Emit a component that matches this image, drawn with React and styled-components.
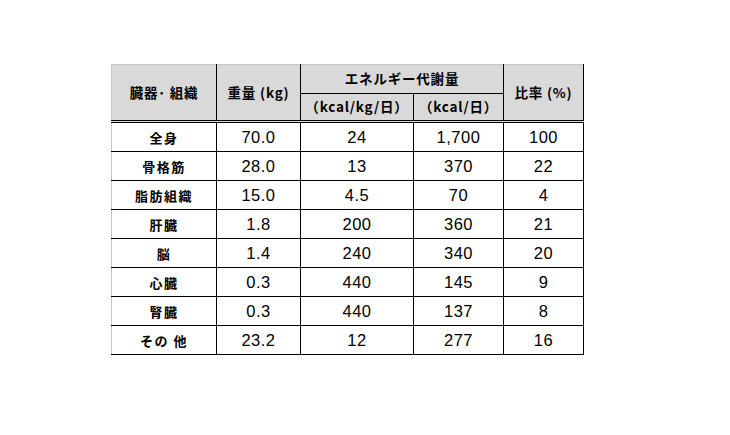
import React from "react";
import styled, { createGlobalStyle } from "styled-components";

const Global = createGlobalStyle`
  html, body { margin: 0; padding: 0; background: #ffffff; }
  body { font-family: "Liberation Sans", "Noto Sans CJK JP", sans-serif; color: #000; }
`;

const Page = styled.div`
  width: 730px;
  height: 435px;
  padding: 64px 0 0 111px;
  box-sizing: border-box;
`;

const Table = styled.table`
  border-collapse: collapse;
  table-layout: fixed;
  width: 473px;
  border-left: 1px solid #c6c6c6;
  border-top: 1px solid #c6c6c6;
  border-right: 1px solid #000;
  border-bottom: 1px solid #000;
`;

const HeadCell = styled.th`
  background: #d9d9d9;
  font-family: "Noto Sans CJK JP", sans-serif;
  font-weight: 700;
  font-size: 13.5px;
  letter-spacing: 0.8px;
  height: ${(p) => p.$h || 28}px;
  padding: 0;
  text-align: center;
  vertical-align: middle;
  border-right: 1px solid #000;
  border-bottom: ${(p) => (p.$double ? "3px double #000" : "1px solid #000")};
  line-height: 1;
  white-space: pre;
`;

const Cell = styled.td`
  height: 28px;
  padding: 0;
  text-align: center;
  vertical-align: middle;
  border-right: 1px solid #000;
  border-bottom: 1px solid #000;
  line-height: 1;
  white-space: pre;
  font-family: ${(p) =>
    p.$label ? '"Noto Sans CJK JP", sans-serif' : '"Liberation Sans", "Noto Sans CJK JP", sans-serif'};
  font-weight: ${(p) => (p.$label ? 700 : 400)};
  font-size: ${(p) => (p.$label ? "13px" : "16.5px")};
  letter-spacing: ${(p) => (p.$label ? "1.5px" : "0.5px")};
`;

const rows = [
  ["全身", "70.0", "24", "1,700", "100"],
  ["骨格筋", "28.0", "13", "370", "22"],
  ["脂肪組織", "15.0", "4.5", "70", "4"],
  ["肝臓", "1.8", "200", "360", "21"],
  ["脳", "1.4", "240", "340", "20"],
  ["心臓", "0.3", "440", "145", "9"],
  ["腎臓", "0.3", "440", "137", "8"],
  ["その 他", "23.2", "12", "277", "16"],
];

export default function App() {
  return (
    <>
      <Global />
      <Page>
        <Table>
          <colgroup>
            <col style={{ width: 105 }} />
            <col style={{ width: 84 }} />
            <col style={{ width: 113 }} />
            <col style={{ width: 90 }} />
            <col style={{ width: 80 }} />
          </colgroup>
          <thead>
            <tr>
              <HeadCell rowSpan={2} $double>臓器･ 組織</HeadCell>
              <HeadCell rowSpan={2} $double>重量 (kg)</HeadCell>
              <HeadCell colSpan={2}>エネルギー代謝量</HeadCell>
              <HeadCell rowSpan={2} $double>比率 (%)</HeadCell>
            </tr>
            <tr>
              <HeadCell $double $h={26}>（kcal/kg/日）</HeadCell>
              <HeadCell $double $h={26}>（kcal/日）</HeadCell>
            </tr>
          </thead>
          <tbody>
            {rows.map((r) => (
              <tr key={r[0]}>
                <Cell $label>{r[0]}</Cell>
                <Cell>{r[1]}</Cell>
                <Cell>{r[2]}</Cell>
                <Cell>{r[3]}</Cell>
                <Cell>{r[4]}</Cell>
              </tr>
            ))}
          </tbody>
        </Table>
      </Page>
    </>
  );
}
